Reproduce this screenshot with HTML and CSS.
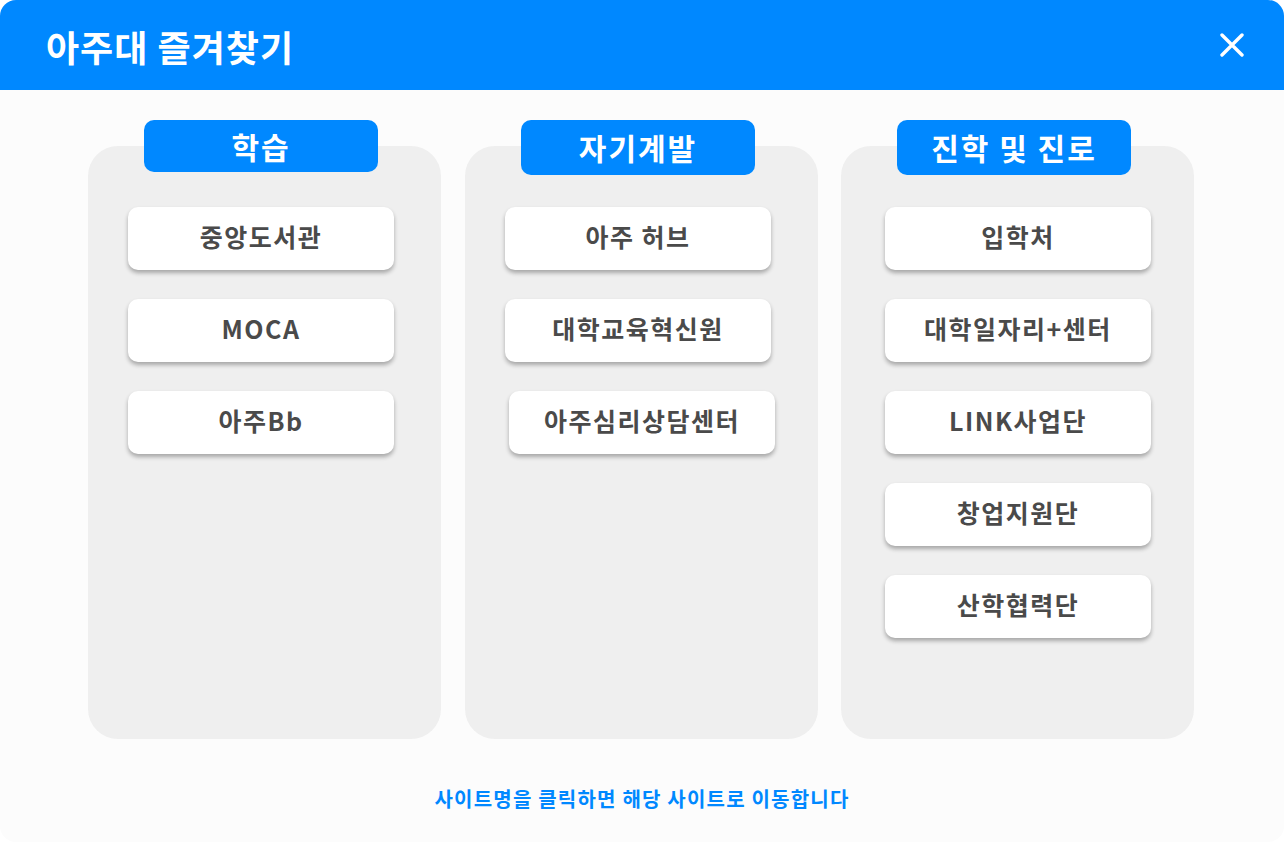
FILE: index.html
```html
<!DOCTYPE html>
<html>
<head>
	<meta charset="utf-8">
	<meta name="viewport" content="width=device-width, initial-scale=1">
	<title>아주대 즐겨찾기</title>
	<link rel="stylesheet" href="styles.css">
</head>
<body>
<div class="modal">
	<div class="modal-header">
		<h1 class="modal-title">아주대 즐겨찾기</h1>
		<button class="close-btn" type="button">
			<svg width="24" height="24" viewBox="0 0 24 24">
				<path d="M2 2 L22 22 M22 2 L2 22" stroke="#ffffff" stroke-width="3.4" stroke-linecap="round" fill="none"/>
			</svg>
		</button>
	</div>
	<div class="modal-body">
		<div class="group">
			<div class="group-title">학습</div>
			<div class="group-box">
				<a class="site" href="#">중앙도서관</a>
				<a class="site" href="#">MOCA</a>
				<a class="site" href="#">아주Bb</a>
			</div>
		</div>
		<div class="group">
			<div class="group-title group-title-tall">자기계발</div>
			<div class="group-box">
				<a class="site" href="#">아주 허브</a>
				<a class="site" href="#">대학교육혁신원</a>
				<a class="site site-shift" href="#">아주심리상담센터</a>
			</div>
		</div>
		<div class="group group-last">
			<div class="group-title group-title-tall">진학 및 진로</div>
			<div class="group-box">
				<a class="site" href="#">입학처</a>
				<a class="site" href="#">대학일자리+센터</a>
				<a class="site" href="#">LINK사업단</a>
				<a class="site" href="#">창업지원단</a>
				<a class="site" href="#">산학협력단</a>
			</div>
		</div>
	</div>
	<p class="modal-foot">사이트명을 클릭하면 해당 사이트로 이동합니다</p>
</div>
</body>
</html>
```

FILE: styles.css
```css
body, p, h1 {
	margin: 0
}

a {
	text-decoration: none
}

button {
	outline: none;
	border: 0;
	background: none;
	padding: 0;
	cursor: pointer;
}

body {
	background-color: #ffffff;
	font-family: "Noto Sans CJK KR", "Noto Sans", sans-serif;
}

.modal {
	height: 842px;
	background-color: #fcfcfc;
	border-radius: 16px;
	overflow: hidden;
}

.modal-header {
	height: 90px;
	background-color: #0088ff;
	display: flex;
	align-items: center;
	justify-content: space-between;
	padding: 0 40px 0 46px;
}

.modal-title {
	color: #ffffff;
	font-size: 36px;
	font-weight: 700;
	letter-spacing: 1px;
	line-height: 1;
	padding-top: 2px;
}

.close-btn {
	width: 24px;
	height: 24px;
	display: block;
}

.close-btn svg {
	display: block;
}

.modal-body {
	display: flex;
	padding: 30px 0 0 88px;
	gap: 24px;
}

.group {
	width: 353px;
	height: 619px;
	display: flex;
	flex-direction: column;
}

.group-title {
	position: relative;
	z-index: 1;
	width: 234px;
	height: 52px;
	margin-left: 56px;
	border-radius: 10px;
	background-color: #0088ff;
	color: #ffffff;
	font-size: 30px;
	font-weight: 700;
	letter-spacing: 2px;
	line-height: 52px;
	text-align: center;
}

.group-title-tall {
	height: 55px;
	line-height: 55px;
}

.group-box {
	flex: 1;
	margin-top: -26px;
	padding: 61px 0 0 40px;
	border-radius: 30px;
	background-color: #efefef;
	display: flex;
	flex-direction: column;
	align-items: flex-start;
	gap: 29px;
}

.group-title-tall + .group-box {
	margin-top: -29px;
	padding-top: 61px;
}

.group-last {
	margin-left: -1px;
}

.group-last .group-box {
	padding-left: 44px;
}

.site {
	width: 266px;
	height: 63px;
	border-radius: 10px;
	background-color: #ffffff;
	box-shadow: 0 3px 4px rgba(0, 0, 0, 0.3);
	color: #4a4a4a;
	font-size: 25px;
	font-weight: 700;
	line-height: 58px;
	text-align: center;
	letter-spacing: 1.5px;
}

.site-shift {
	margin-left: 4px;
}

.modal-foot {
	margin-top: 47px;
	text-align: center;
	color: #0088ff;
	font-size: 20px;
	font-weight: 700;
	letter-spacing: 1.2px;
	line-height: 26px;
}
```
